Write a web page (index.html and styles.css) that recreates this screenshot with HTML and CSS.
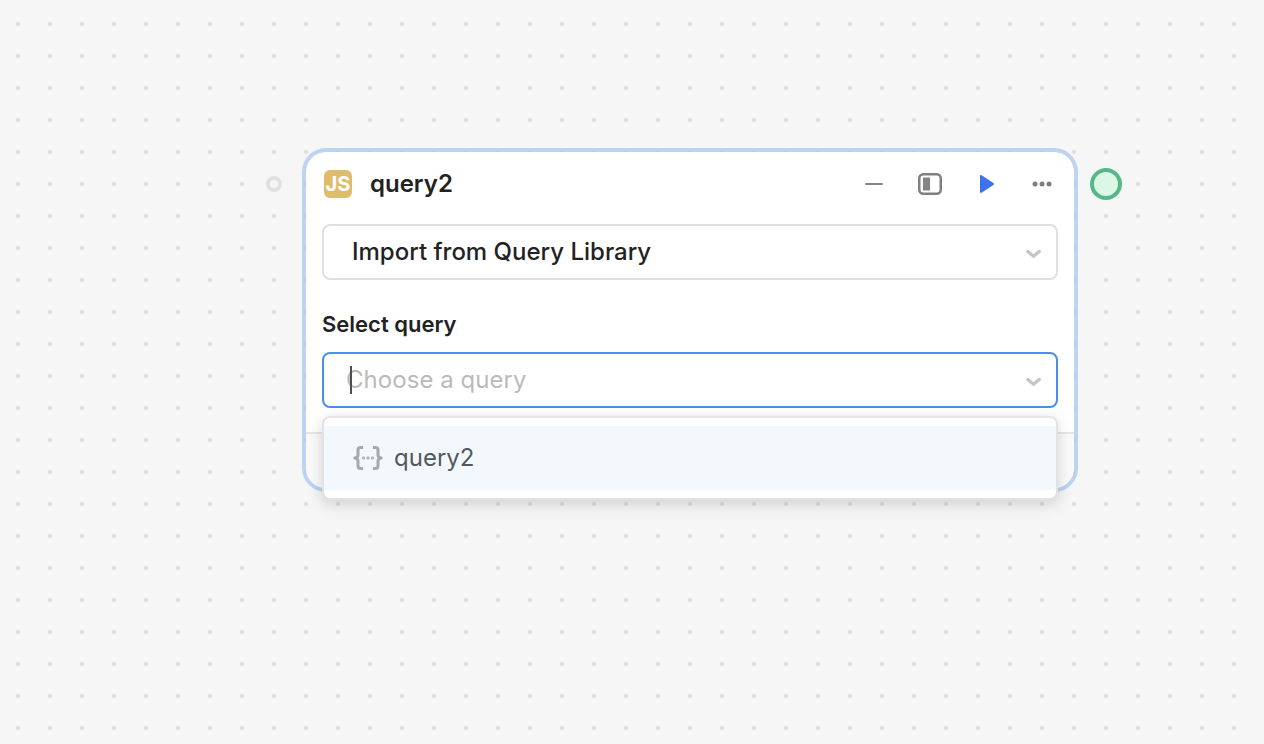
FILE: index.html
```html
<!DOCTYPE html>
<html lang="en">
<head>
<meta charset="utf-8">
<title>query2</title>
<link rel="stylesheet" href="styles.css">
</head>
<body>
<main class="canvas">
  <span class="port port-in"></span>
  <section class="node">
    <header class="node-head">
      <span class="js-badge">JS</span>
      <h1 class="node-title">query2</h1>
      <div class="node-actions">
        <svg class="act" width="18" height="20" viewBox="0 0 18 20"><rect x="0" y="9" width="18" height="2" rx="1" fill="#858585"/></svg>
        <svg class="act" width="24" height="22" viewBox="0 0 24 22"><rect x="1.250" y="1.250" width="21.500" height="19.500" rx="4" fill="none" stroke="#808080" stroke-width="2.500"/><rect x="5" y="4.500" width="7" height="13" fill="#858585"/></svg>
        <svg class="act" width="14" height="18" viewBox="0 0 14 18"><path d="M0 1.200C0 .3.900-.2 1.600.3L13.400 8c.7.500.7 1.500 0 2L1.600 17.700C.9 18.200 0 17.700 0 16.800z" fill="#3f72ee"/></svg>
        <svg class="act" width="20" height="6" viewBox="0 0 20 6"><circle cx="3" cy="3" r="2.500" fill="#7d7d7d"/><circle cx="10" cy="3" r="2.500" fill="#7d7d7d"/><circle cx="17" cy="3" r="2.500" fill="#7d7d7d"/></svg>
      </div>
    </header>
    <div class="node-body">
      <div class="select">
        <span class="select-value">Import from Query Library</span>
        <svg class="chev" width="15" height="8" viewBox="0 0 15 8"><path d="M1.800 1.500l5.700 4.800 5.700-4.800" fill="none" stroke="#c4c4c4" stroke-width="3.200" stroke-linecap="round" stroke-linejoin="round"/></svg>
      </div>
      <label class="field-label">Select query</label>
      <div class="select select-focus">
        <span class="caret"></span>
        <span class="select-placeholder">Choose a query</span>
        <svg class="chev" width="15" height="8" viewBox="0 0 15 8"><path d="M1.800 1.500l5.700 4.800 5.700-4.800" fill="none" stroke="#c4c4c4" stroke-width="3.200" stroke-linecap="round" stroke-linejoin="round"/></svg>
      </div>
    </div>
    <div class="node-foot"></div>
    <div class="menu">
      <div class="menu-item">
        <svg width="30" height="24" viewBox="0 0 30 24"><g fill="none" stroke="#a8a9ab" stroke-width="3" stroke-linejoin="round"><path d="M10 1.500H7.500C5.900 1.500 5 2.400 5 4v5.200C5 10.600 3.800 11.500 1.800 12 3.800 12.500 5 13.400 5 14.800V20c0 1.600.9 2.500 2.500 2.500H10"/><path d="M20 1.500h2.500c1.600 0 2.500.9 2.500 2.500v5.200c0 1.400 1.200 2.300 3.200 2.800-2 .5-3.200 1.400-3.200 2.800V20c0 1.600-.9 2.500-2.500 2.500H20"/></g><circle cx="10.500" cy="12" r="1.800" fill="#bcbdbf"/><circle cx="15" cy="12" r="1.800" fill="#bcbdbf"/><circle cx="19.500" cy="12" r="1.800" fill="#bcbdbf"/></svg>
        <span class="menu-text">query2</span>
      </div>
    </div>
  </section>
  <span class="port port-out"></span>
</main>
</body>
</html>
```
FILE: styles.css
```css
* { box-sizing: border-box; }
html, body { margin: 0; height: 100%; }
body {
  font-family: Inter, "Liberation Sans", sans-serif;
  color: #222;
  overflow: hidden;
}
.canvas {
  position: relative;
  width: 1264px;
  height: 744px;
  background-color: #f6f6f6;
  background-image: radial-gradient(circle at 18px 24px, #dfdfdf 0, #dfdfdf 1.700px, transparent 2.300px);
  background-size: 32px 32px;
}
.node {
  position: absolute;
  left: 302px;
  top: 148px;
  width: 776px;
  height: 344px;
  background: #fff;
  background-clip: padding-box;
  border: 4px solid rgba(165, 197, 240, .72);
  border-radius: 24px;
}
.node-head {
  display: flex;
  align-items: center;
  height: 64px;
  padding: 0 22px 0 18px;
}
.js-badge {
  width: 28px;
  height: 28px;
  border-radius: 6px;
  background: #dfbc6a;
  color: #fff;
  font-size: 20px;
  font-weight: 700;
  line-height: 29px;
  text-align: center;
}
.node-title {
  margin: 0 0 0 18px;
  font-size: 24px;
  font-weight: 600;
  line-height: 32px;
  color: #222;
}
.node-actions {
  margin-left: auto;
  display: flex;
  align-items: center;
}
.node-actions .act:nth-child(1) { margin-right: 35px; }
.node-actions .act:nth-child(2) { margin-right: 38px; }
.node-actions .act:nth-child(3) { margin-right: 38px; }
.node-body {
  padding: 8px 16px 0;
}
.select {
  position: relative;
  display: flex;
  align-items: center;
  justify-content: space-between;
  height: 56px;
  padding: 0 15px 0 28px;
  border: 2px solid #e0e0e0;
  border-radius: 8px;
  background: #fff;
}
.select-focus {
  padding-left: 22px;
  border-color: #4a90e8;
}
.select-value {
  font-size: 24px;
  font-weight: 500;
  line-height: 32px;
  color: #222;
}
.select-placeholder {
  font-size: 24px;
  font-weight: 400;
  letter-spacing: .05px;
  line-height: 32px;
  color: #bababa;
}
.chev { margin-top: 4px; }
.caret {
  position: absolute;
  left: 26px;
  top: 12px;
  width: 2px;
  height: 28px;
  background: #4a4f55;
}
.field-label {
  display: block;
  margin: 28px 0 12px;
  font-size: 22px;
  font-weight: 600;
  line-height: 32px;
  color: #222;
}
.node-foot {
  position: absolute;
  left: 0;
  right: 0;
  top: 280px;
  bottom: 0;
  background: #fafafa;
  border-top: 2px solid #e6e6e6;
  border-radius: 0 0 20px 20px;
}
.menu {
  position: absolute;
  left: 16px;
  top: 264px;
  width: 736px;
  height: 84px;
  padding: 8px 0;
  background: #fff;
  border: 2px solid #e2e2e2;
  border-top-color: #e6e6e6;
  border-radius: 8px;
  box-shadow: 0 4px 16px rgba(0, 0, 0, .16);
}
.menu-item {
  display: flex;
  align-items: center;
  gap: 11px;
  height: 64px;
  padding: 0 0 0 29px;
  background: #f2f8fc;
}
.menu-text {
  font-size: 24px;
  line-height: 32px;
  color: #53585e;
}
.port {
  position: absolute;
  border-radius: 50%;
}
.port-in {
  left: 266px;
  top: 176px;
  width: 16px;
  height: 16px;
  background: #f6f6f6;
  border: 4px solid #e0e0e0;
}
.port-out {
  left: 1090px;
  top: 168px;
  width: 32px;
  height: 32px;
  background: #dcf7e5;
  border: 4px solid #55b78a;
}
```
